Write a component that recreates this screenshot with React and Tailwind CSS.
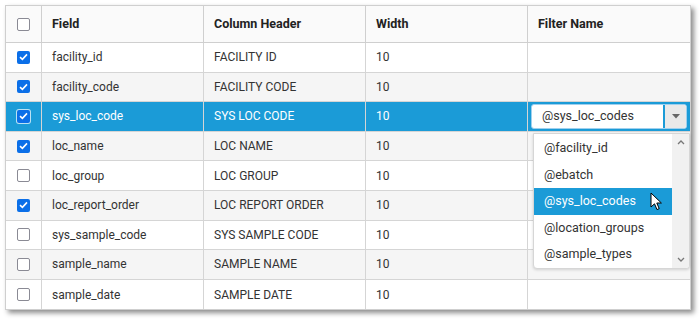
import React from "react";

const rows = [
  { field: "facility_id", header: "FACILITY ID", width: "10", checked: true },
  { field: "facility_code", header: "FACILITY CODE", width: "10", checked: true },
  { field: "sys_loc_code", header: "SYS LOC CODE", width: "10", checked: true, selected: true, filter: "@sys_loc_codes" },
  { field: "loc_name", header: "LOC NAME", width: "10", checked: true },
  { field: "loc_group", header: "LOC GROUP", width: "10", checked: false },
  { field: "loc_report_order", header: "LOC REPORT ORDER", width: "10", checked: true },
  { field: "sys_sample_code", header: "SYS SAMPLE CODE", width: "10", checked: false },
  { field: "sample_name", header: "SAMPLE NAME", width: "10", checked: false },
  { field: "sample_date", header: "SAMPLE DATE", width: "10", checked: false },
];

const options = ["@facility_id", "@ebatch", "@sys_loc_codes", "@location_groups", "@sample_types"];

function Check({ checked, onBlue }) {
  if (checked) {
    return (
      <span className={`flex h-[13px] w-[13px] items-center justify-center rounded-[2px] bg-[#0b6fe8] ${onBlue ? "ring-1 ring-white/70" : ""}`}>
        <svg width="9" height="8" viewBox="0 0 9 8">
          <path d="M1 4.2 L3.4 6.4 L8 1.4" fill="none" stroke="white" strokeWidth="1.6" />
        </svg>
      </span>
    );
  }
  return <span className="h-[13px] w-[13px] rounded-[2px] border border-[#8a8a94] bg-white" />;
}

function Cursor() {
  return (
    <svg width="14" height="20" viewBox="0 0 14 20" className="absolute left-[116px] top-[4px]">
      <path d="M1 1 L1 15 L4.5 11.8 L7 17.6 L9.2 16.6 L6.8 11 L11.4 11 Z" fill="white" stroke="black" strokeWidth="1" strokeLinejoin="round" />
    </svg>
  );
}

export default function App() {
  return (
    <div className="h-[319px] w-[700px] bg-white font-['Roboto',sans-serif] text-[12px] text-[#333]">
      <div className="pl-[5px] pt-[5px]">
        <div className="relative w-[686px] border border-[#cfcfcf] bg-white shadow-[3px_3px_5px_rgba(0,0,0,0.45)]">
          <div className="grid h-[37px] grid-cols-[36px_162px_162px_162px_162px] border-b border-[#cfcfcf] bg-[#fafafa] text-[12.5px] font-bold text-[#222]">
            <div className="flex items-center justify-center border-r border-[#cfcfcf]">
              <Check checked={false} />
            </div>
            <div className="flex items-center border-r border-[#cfcfcf] pl-[10px]">Field</div>
            <div className="flex items-center border-r border-[#cfcfcf] pl-[10px]">Column Header</div>
            <div className="flex items-center border-r border-[#cfcfcf] pl-[10px]">Width</div>
            <div className="flex items-center pl-[10px]">Filter Name</div>
          </div>
          {rows.map((r, i) => {
            const bg = r.selected ? "bg-[#1b9bd7] text-white" : i % 2 === 1 ? "bg-[#f5f5f5]" : "bg-white";
            return (
              <div
                key={r.field}
                className={`grid h-[29.6px] grid-cols-[36px_162px_162px_162px_162px] ${i < rows.length - 1 ? "border-b border-[#d5d5d5]" : ""} ${bg}`}
              >
                <div className="flex items-center justify-center border-r border-[#d5d5d5]">
                  <Check checked={r.checked} onBlue={r.selected} />
                </div>
                <div className="flex items-center border-r border-[#d5d5d5] pl-[10px]">{r.field}</div>
                <div className="flex items-center border-r border-[#d5d5d5] pl-[10px]">{r.header}</div>
                <div className="flex items-center border-r border-[#d5d5d5] pl-[10px]">{r.width}</div>
                <div className="flex items-center px-[3px]">
                  {r.filter && (
                    <div className="flex h-[25px] w-full items-stretch overflow-hidden rounded-[3px] border border-[#9fd0ee] bg-white text-[12.5px] text-[#333]">
                      <div className="flex flex-1 items-center border-r-2 border-[#1b9bd7] pl-[10px]">{r.filter}</div>
                      <div className="flex w-[21px] items-center justify-center bg-[#e9e9e9]">
                        <svg width="8" height="5" viewBox="0 0 8 5">
                          <path d="M0 0 L8 0 L4 4.5 Z" fill="#666" />
                        </svg>
                      </div>
                    </div>
                  )}
                </div>
              </div>
            );
          })}

          <div className="absolute left-[527px] top-[127px] flex h-[136px] w-[157px] overflow-hidden rounded-b-[4px] border border-[#d6d6d6] bg-white text-[12.5px] text-[#333] shadow-[0_1px_3px_rgba(0,0,0,0.15)]">
            <div className="flex flex-1 flex-col pt-[1px]">
              {options.map((o) => (
                <div
                  key={o}
                  className={`relative flex h-[26.7px] items-center pl-[10px] ${o === "@sys_loc_codes" ? "bg-[#1b9bd7] text-white" : ""}`}
                >
                  {o}
                  {o === "@sys_loc_codes" && <Cursor />}
                </div>
              ))}
            </div>
            <div className="flex w-[17px] flex-col justify-between bg-[#f1f1f1]">
              <div className="flex h-[17px] items-center justify-center">
                <svg width="8" height="5" viewBox="0 0 8 5">
                  <path d="M1 4 L4 1 L7 4" fill="none" stroke="#777" strokeWidth="1.3" />
                </svg>
              </div>
              <div className="flex-1" />
              <div className="flex h-[17px] items-center justify-center">
                <svg width="8" height="5" viewBox="0 0 8 5">
                  <path d="M1 1 L4 4 L7 1" fill="none" stroke="#777" strokeWidth="1.3" />
                </svg>
              </div>
            </div>
          </div>
        </div>
      </div>
    </div>
  );
}
